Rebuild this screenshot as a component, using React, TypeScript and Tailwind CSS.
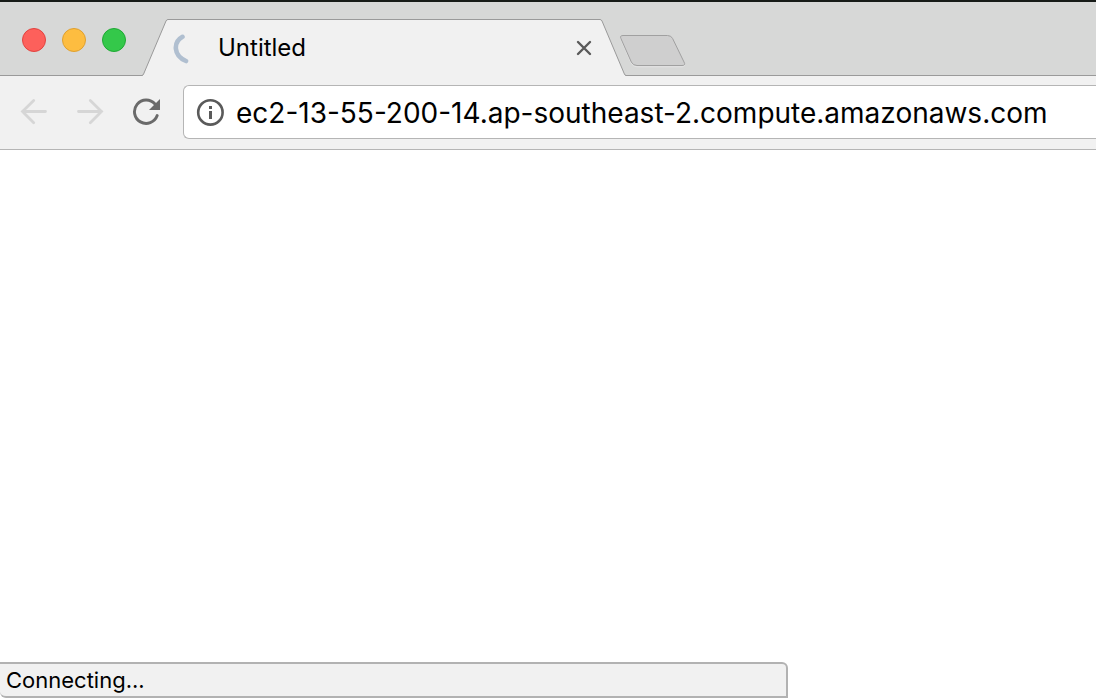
import React from "react";

function TrafficLights() {
  return (
    <div className="flex gap-4 pl-[22px] pt-[26px]">
      <button aria-label="Close window" className="size-6 rounded-full border border-[#e2433f] bg-[#fd605b]" />
      <button aria-label="Minimise window" className="size-6 rounded-full border border-[#dfa02f] bg-[#fdbd40]" />
      <button aria-label="Zoom window" className="size-6 rounded-full border border-[#1fa934] bg-[#34c84a]" />
    </div>
  );
}

function Tab() {
  return (
    <div className="relative z-10 ml-4 flex h-[57px] min-w-0 max-w-[484px] flex-1 self-end">
      <svg className="h-[57px] w-[26px] shrink-0" viewBox="0 0 26 57" aria-hidden="true">
        <path d="M0 57 Q1 56.5 1.6 55 L24 2 Q24.7 .5 26 .5 V57Z" fill="#f1f1f1" />
        <path d="M0 56.5 Q1 56.3 1.6 55 L24 2 Q24.7 .5 26 .5" fill="none" stroke="#9a9a9a" />
      </svg>
      <div className="flex min-w-0 flex-1 items-center border-t border-[#9a9a9a] bg-[#f1f1f1] pl-1 pr-2">
        <svg className="h-8 w-5 shrink-0" viewBox="0 0 20 32" fill="none" aria-hidden="true">
          <path d="M10.5 4.8 C1.2 10 1 23.5 14 29" stroke="#b0bfd0" strokeWidth="4.6" strokeLinecap="round" />
        </svg>
        <span className="ml-[26px] flex-1 truncate text-2xl text-black">Untitled</span>
        <button aria-label="Close tab" className="flex size-4 items-center justify-center">
          <svg className="size-4" viewBox="0 0 16 16" aria-hidden="true">
            <path d="M2 2 L14 14 M14 2 L2 14" stroke="#5a5a5a" strokeWidth="2.4" strokeLinecap="round" />
          </svg>
        </button>
      </div>
      <svg className="h-[57px] w-[26px] shrink-0" viewBox="0 0 26 57" aria-hidden="true">
        <path d="M26 57 Q25 56.5 24.4 55 L2 2 Q1.3 .5 0 .5 V57Z" fill="#f1f1f1" />
        <path d="M26 56.5 Q25 56.3 24.4 55 L2 2 Q1.3 .5 0 .5" fill="none" stroke="#9a9a9a" />
      </svg>
    </div>
  );
}

function TabStrip() {
  return (
    <div className="flex h-[74px] bg-[#d7d8d7] shadow-[inset_0_-1px_0_#9a9a9a]">
      <TrafficLights />
      <Tab />
      <button aria-label="New tab" className="-ml-2 mt-8 h-9 w-[68px] shrink-0">
        <svg className="h-9 w-[68px]" viewBox="0 0 68 36" aria-hidden="true">
          <path d="M5 2.5 H49.5 Q53.2 2.5 54.6 5.5 L66 29 Q68 32.8 64 32.8 H19 Q15 32.8 13.3 29.3 L2.9 5.5 Q1.6 2.5 5 2.5Z" fill="none" stroke="#e4e4e4" />
          <path d="M5 1.5 H49.5 Q53.2 1.5 54.6 4.5 L66 28 Q68 31.5 64 31.5 H19 Q15 31.5 13.3 28 L2.9 4.5 Q1.6 1.5 5 1.5Z" fill="#cfcfcf" stroke="#a0a0a0" />
        </svg>
      </button>
    </div>
  );
}

function Toolbar() {
  return (
    <div className="flex h-[74px] items-start border-b border-[#b5b5b5] bg-[#f1f1f1] pl-5 pt-[9px]">
      <div className="flex h-[54px] shrink-0 items-center gap-7">
        <button aria-label="Back" disabled className="size-7">
          <svg className="size-7" viewBox="0 0 28 28" fill="none" stroke="#d6d6d6" strokeWidth="2.8" strokeLinecap="round" aria-hidden="true">
            <path d="M13.7 2.5 L2.5 13.5 L13.7 24.8 M2.5 13.5 H25.5" />
          </svg>
        </button>
        <button aria-label="Forward" disabled className="size-7">
          <svg className="size-7" viewBox="0 0 28 28" fill="none" stroke="#d6d6d6" strokeWidth="2.8" strokeLinecap="round" aria-hidden="true">
            <path d="M14.3 2.5 L25.5 13.5 L14.3 24.8 M25.5 13.5 H2.5" />
          </svg>
        </button>
        <button aria-label="Reload" className="size-7">
          <svg className="size-7" viewBox="0 0 28 28" aria-hidden="true">
            <path d="M25.2 17.6 A11.7 11.7 0 1 1 23 6" fill="none" stroke="#6a6a6a" strokeWidth="2.9" strokeLinecap="round" />
            <path d="M28 1 V12 H17Z" fill="#6a6a6a" />
          </svg>
        </button>
      </div>
      <div className="ml-[23px] flex h-[54px] min-w-0 flex-1 items-center rounded-l-md border border-r-0 border-[#b5b5b5] bg-white pl-3">
        <svg className="size-7 shrink-0" viewBox="0 0 28 28" aria-hidden="true">
          <circle cx="14.4" cy="14.4" r="12.2" fill="none" stroke="#5a5a5a" strokeWidth="2.6" />
          <path d="M13 8 H16 V11 H13Z M13 13 H16 V21 H13Z" fill="#5a5a5a" />
        </svg>
        <input
          aria-label="Address"
          defaultValue="ec2-13-55-200-14.ap-southeast-2.compute.amazonaws.com"
          className="ml-3 h-full min-w-0 flex-1 bg-transparent pt-0.5 text-[28px] text-black outline-none"
        />
      </div>
    </div>
  );
}

export default function App() {
  return (
    <div className="relative flex min-h-screen flex-col bg-white font-['Inter',sans-serif]">
      <header>
        <div className="h-[2px] bg-[#171b18]" />
        <TabStrip />
        <Toolbar />
      </header>
      <main className="flex-1" />
      <div role="status" className="absolute bottom-0 left-0 flex h-9 w-full max-w-[788px] items-center rounded-bl-md rounded-tr-md border-2 border-l-0 border-[#b2b2b2] bg-[#f1f1f1] pl-[6px] text-[22px] text-black">
        Connecting...
      </div>
    </div>
  );
}
